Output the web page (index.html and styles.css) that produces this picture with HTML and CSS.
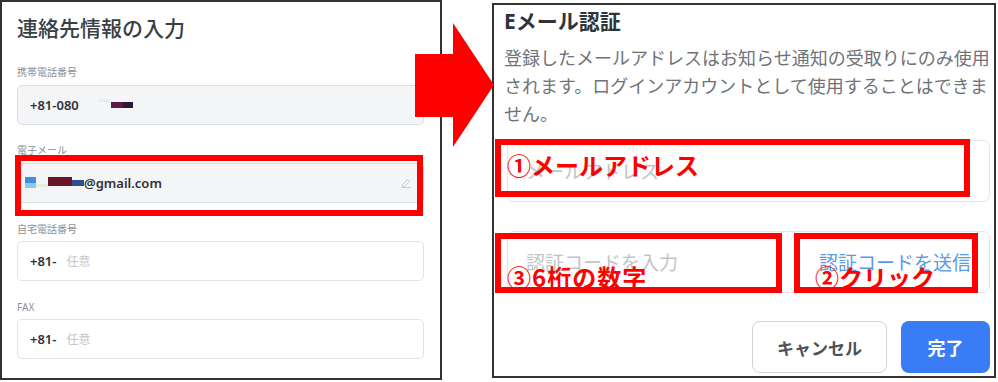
FILE: index.html
```html
<!DOCTYPE html>
<html lang="ja">
<head>
    <meta charset="UTF-8">
    <meta name="viewport" content="width=device-width, initial-scale=1.0">
    <title>連絡先情報とEメール認証</title>
    <link rel="stylesheet" href="styles.css">
</head>
<body>
    <div class="sheet">
        <section class="panel contact">
            <h2 class="contact-title">連絡先情報の入力</h2>

            <div class="field">
                <span class="field-label">携帯電話番号</span>
                <div class="field-box locked">
                    <span>+81-080</span>
                    <span class="mask mask-haze"></span>
                    <span class="mask mask-plum"></span>
                    <span class="mask mask-ink"></span>
                </div>
            </div>

            <div class="field">
                <span class="field-label">電子メール</span>
                <div class="field-box locked mail">
                    <span class="mask mask-sky"></span>
                    <span class="mask mask-mint"></span>
                    <span class="mask mask-wine"></span>
                    <span class="mask mask-navy"></span>
                    <span>@gmail.com</span>
                    <svg class="pencil" width="10" height="10" viewBox="0 0 10 10">
                        <path d="M1.5 8.5 L1.5 6.5 L6.5 1.5 L8.5 3.5 L3.5 8.5 Z M0.5 9.5 H9.5" fill="none" stroke="#c9ccd0" stroke-width="1"/>
                    </svg>
                </div>
            </div>

            <div class="field">
                <span class="field-label">自宅電話番号</span>
                <div class="field-box">
                    <span>+81-</span>
                    <span class="hint">任意</span>
                </div>
            </div>

            <div class="field">
                <span class="field-label">FAX</span>
                <div class="field-box">
                    <span>+81-</span>
                    <span class="hint">任意</span>
                </div>
            </div>

            <div class="mark mark-email"></div>
        </section>

        <section class="panel verify">
            <h2 class="verify-title">Eメール認証</h2>
            <p class="verify-note">登録したメールアドレスはお知らせ通知の受取りにのみ使用されます。ログインアカウントとして使用することはできません。</p>

            <div class="verify-input">
                <span class="placeholder">メールアドレス</span>
            </div>

            <div class="verify-input code-row">
                <span class="placeholder">認証コードを入力</span>
                <span class="send-link">認証コードを送信</span>
            </div>

            <div class="actions">
                <button class="btn btn-cancel" type="button">キャンセル</button>
                <button class="btn btn-done" type="button">完了</button>
            </div>

            <div class="mark mark-address">①メールアドレス</div>
            <div class="mark mark-digits">③6桁の数字</div>
            <div class="mark mark-send">②クリック</div>
        </section>

        <svg class="arrow" width="80" height="125" viewBox="0 0 80 125">
            <polygon points="0,31 38,31 38,0 79,62 38,124 38,94 0,94" fill="#ff0000"/>
        </svg>
    </div>
</body>
</html>
```

FILE: styles.css
```css
* {
  box-sizing: border-box;
}

body {
  margin: 0;
  background-color: #fff;
  font-family: "Noto Sans", "Noto Sans CJK JP", sans-serif;
  color: #333;
}

.sheet {
  position: relative;
  display: flex;
  align-items: flex-start;
  gap: 50px;
  width: 998px;
  height: 382px;
}

.panel {
  position: relative;
  border: 2px solid #333;
  background-color: #fff;
}

/* left: contact form */
.contact {
  width: 442px;
  height: 380px;
  padding: 11px 16px 0 15px;
}

.contact-title {
  margin: 0 0 22px;
  font-size: 21px;
  line-height: 30px;
  font-weight: 500;
  color: #3a3f45;
}

.field {
  margin-bottom: 18.8px;
}

.field-label {
  display: block;
  font-size: 10px;
  line-height: 14px;
  color: #8c8f94;
  margin-bottom: 5.5px;
}

.field-box {
  display: flex;
  align-items: center;
  height: 40px;
  padding: 0 12px;
  border: 1px solid #e1e3e7;
  border-radius: 5px;
  background-color: #fff;
  font-size: 13px;
  font-weight: 600;
  color: #2f3237;
}

.field-box.locked {
  background-color: #f4f5f7;
  border-color: #dadde2;
}

.hint {
  margin-left: 10px;
  font-size: 12px;
  font-weight: 400;
  color: #c4c6ca;
}

.mask {
  display: inline-block;
}

.mask-haze {
  width: 10px;
  height: 3px;
  margin: -8px 0 0 20px;
  background-color: #e4ecf7;
}

.mask-plum {
  width: 12px;
  height: 6px;
  margin-left: 2px;
  background-color: #5c1b45;
}

.mask-ink {
  width: 10px;
  height: 6px;
  background-color: #2a1a33;
}

.mail .mask-sky {
  width: 11px;
  height: 11px;
  margin-left: -5px;
  background: linear-gradient(#3f8fdf 55%, #8cc8f2 55%);
}

.mask-mint {
  width: 12px;
  height: 3px;
  margin-top: 5px;
  background-color: #dcf2e7;
}

.mask-wine {
  width: 24px;
  height: 9px;
  margin-top: -2px;
  background-color: #6a1628;
}

.mask-navy {
  width: 12px;
  height: 6px;
  margin-top: 1px;
  background-color: #2c4f8e;
}

.pencil {
  margin-left: auto;
}

/* right: e-mail verification */
.verify {
  width: 504px;
  height: 375px;
  margin-top: 3px;
  padding: 2px 4px 0 10px;
}

.verify-title {
  margin: 0;
  font-size: 21px;
  line-height: 28px;
  font-weight: 700;
  color: #2f343a;
}

.verify-note {
  margin: 9px 0 0;
  font-size: 18px;
  line-height: 28px;
  color: #6f7378;
}

.verify-input {
  display: flex;
  align-items: center;
  justify-content: space-between;
  height: 62px;
  margin: 12px 0 0 3px;
  padding: 0 18px;
  border: 1px solid #e4e6e9;
  border-radius: 7px;
  font-size: 19px;
}

.code-row {
  margin-top: 29px;
}

.placeholder {
  color: #c2c4c8;
}

.send-link {
  color: #5b9ae6;
}

.actions {
  display: flex;
  justify-content: flex-end;
  gap: 14px;
  margin-top: 28px;
}

.btn {
  height: 52px;
  border-radius: 8px;
  font-family: "Noto Sans", "Noto Sans CJK JP", sans-serif;
  font-size: 17px;
  font-weight: 700;
  cursor: pointer;
}

.btn-cancel {
  width: 135px;
  border: 1px solid #cfd2d6;
  background-color: #fff;
  color: #4f5358;
}

.btn-done {
  width: 89px;
  border: none;
  background-color: #3a7cf6;
  color: #fff;
  font-size: 18px;
}

/* red annotations */
.mark {
  position: absolute;
  border: 6px solid #ff0000;
  color: #ff0000;
  font-family: "Noto Sans CJK JP", sans-serif;
  font-size: 24px;
  line-height: 30px;
  font-weight: 700;
  white-space: nowrap;
}

.mark-email {
  left: 13px;
  top: 153px;
  width: 408px;
  height: 61px;
}

.mark-address {
  left: 1px;
  top: 134px;
  width: 475px;
  height: 58px;
  padding: 5px 0 0 6px;
}

.mark-digits {
  left: 1px;
  top: 228px;
  width: 287px;
  height: 60px;
  padding: 23px 0 0 6px;
  letter-spacing: 1px;
}

.mark-send {
  left: 300px;
  top: 228px;
  width: 184px;
  height: 60px;
  padding: 23px 0 0 15px;
}

.arrow {
  position: absolute;
  left: 415px;
  top: 23px;
}
```
